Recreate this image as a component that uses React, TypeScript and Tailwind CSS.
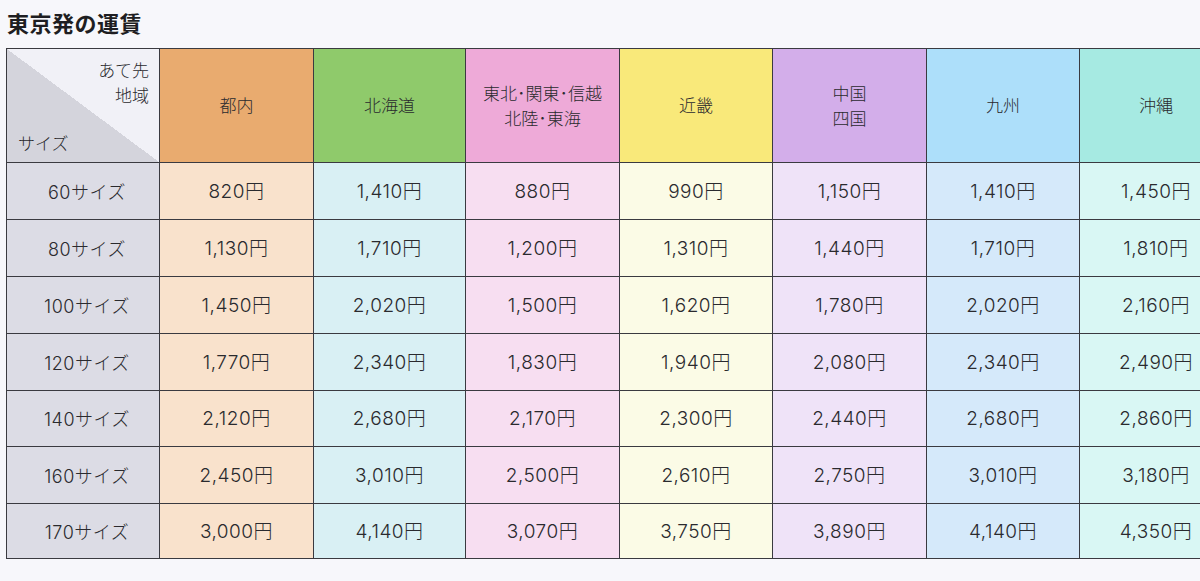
import React from "react";

const heads = [
  { label: ["都内"], bg: "bg-[#e9ab6f]", body: "bg-[#f9e2cc]" },
  { label: ["北海道"], bg: "bg-[#8fca6b]", body: "bg-[#d9f0f4]" },
  { label: ["東北･関東･信越", "北陸･東海"], bg: "bg-[#eeaad8]", body: "bg-[#f7def1]" },
  { label: ["近畿"], bg: "bg-[#f9e97a]", body: "bg-[#fbfbe6]" },
  { label: ["中国", "四国"], bg: "bg-[#d3aeea]", body: "bg-[#efe3f8]" },
  { label: ["九州"], bg: "bg-[#addffa]", body: "bg-[#d5e9fa]" },
  { label: ["沖縄"], bg: "bg-[#a6eae2]", body: "bg-[#d9f7f4]" },
];

const rows: { size: string; prices: string[]; h: string }[] = [
  { size: "60", prices: ["820", "1,410", "880", "990", "1,150", "1,410", "1,450"], h: "h-[56px]" },
  { size: "80", prices: ["1,130", "1,710", "1,200", "1,310", "1,440", "1,710", "1,810"], h: "h-[56px]" },
  { size: "100", prices: ["1,450", "2,020", "1,500", "1,620", "1,780", "2,020", "2,160"], h: "h-[56px]" },
  { size: "120", prices: ["1,770", "2,340", "1,830", "1,940", "2,080", "2,340", "2,490"], h: "h-[56px]" },
  { size: "140", prices: ["2,120", "2,680", "2,170", "2,300", "2,440", "2,680", "2,860"], h: "h-[55px]" },
  { size: "160", prices: ["2,450", "3,010", "2,500", "2,610", "2,750", "3,010", "3,180"], h: "h-[56px]" },
  { size: "170", prices: ["3,000", "4,140", "3,070", "3,750", "3,890", "4,140", "4,350"], h: "h-[54px]" },
];

const widths = ["w-[152px]", "w-[153px]", "w-[151px]", "w-[153px]", "w-[152px]", "w-[153px]", "w-[152px]", "w-[152px]"];

const bodyFont = { fontFamily: 'Inter, "Noto Sans CJK JP", sans-serif' };

export default function App() {
  return (
    <div
      className="w-[1200px] h-[581px] overflow-hidden bg-[#f7f7fb] text-[#2a2a2e]"
      style={{ fontFamily: '"Noto Sans CJK JP", "Noto Sans", sans-serif' }}
    >
      <div className="pl-[7px] pt-[9px] text-[22px] leading-[26px] font-bold text-[#1e1e22] tracking-[0.5px]">
        東京発の運賃
      </div>
      <div className="ml-[6px] mt-[13px] w-max border border-[#3a3a40] bg-[#3a3a40] flex flex-col gap-px">
        <div className="flex gap-px h-[113px] font-light">
          <div
            className={`${widths[0]} relative bg-[linear-gradient(to_top_right,#d4d4dc_50%,#f1f1f7_50%)]`}
          >
            <div className="absolute right-[10px] top-[8px] text-right text-[17px] leading-[25px]">
              <div>あて先</div>
              <div>地域</div>
            </div>
            <div className="absolute left-[11px] bottom-[7px] text-[17px] leading-[25px]">サイズ</div>
          </div>
          {heads.map((h, i) => (
            <div
              key={i}
              className={`${widths[i + 1]} ${h.bg} flex flex-col items-center justify-center text-[17px] leading-[25px] pb-[2px]`}
            >
              {h.label.map((l) => (
                <div key={l}>{l}</div>
              ))}
            </div>
          ))}
        </div>
        {rows.map((r) => (
          <div key={r.size} className={`flex gap-px ${r.h} font-light`} style={bodyFont}>
            <div className={`${widths[0]} bg-[#dcdce5] flex items-center justify-center pl-[8px] pt-[2px] text-[18px] tracking-[0.5px]`}>
              {r.size}サイズ
            </div>
            {r.prices.map((p, i) => (
              <div
                key={i}
                className={`${widths[i + 1]} ${heads[i].body} flex items-center justify-center pt-[2px] text-[19px] tracking-[0.5px]`}
              >
                {p}円
              </div>
            ))}
          </div>
        ))}
      </div>
    </div>
  );
}
